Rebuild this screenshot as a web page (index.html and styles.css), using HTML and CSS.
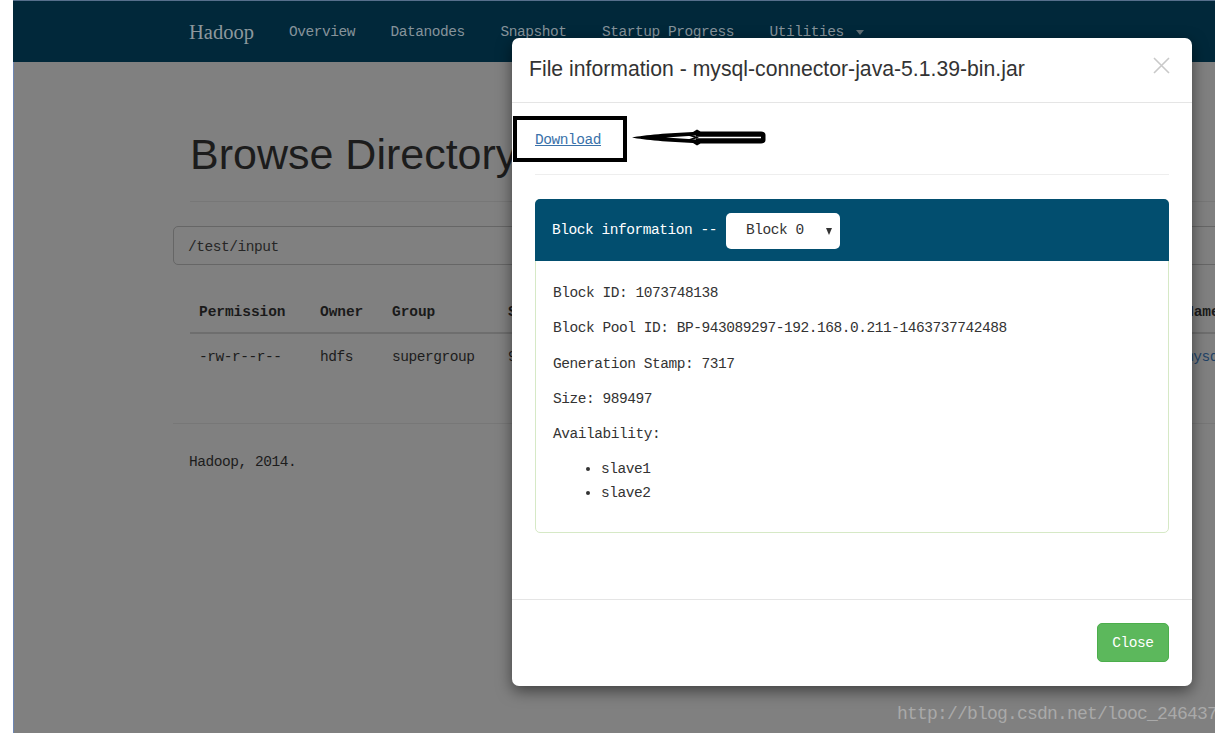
FILE: index.html
```html
<!DOCTYPE html>
<html lang="en">
<head>
<meta charset="utf-8">
<title>Browsing HDFS</title>
<link rel="stylesheet" href="styles.css">
</head>
<body>
<div class="screen">
  <nav class="navbar">
    <span class="brand">Hadoop</span>
    <ul class="nav">
      <li>Overview</li>
      <li>Datanodes</li>
      <li>Snapshot</li>
      <li>Startup Progress</li>
      <li>Utilities<span class="caret"></span></li>
    </ul>
  </nav>

  <main class="page">
    <div class="page-header"><h1>Browse Directory</h1></div>
    <div class="path-input">/test/input</div>
    <table class="listing">
      <colgroup>
        <col class="c-perm"><col class="c-owner"><col class="c-group"><col class="c-size">
        <col class="c-mod"><col class="c-rep"><col class="c-bsize"><col class="c-name">
      </colgroup>
      <thead>
        <tr><th>Permission</th><th>Owner</th><th>Group</th><th>Size</th><th>Last Modified</th><th>Replication</th><th>Block Size</th><th>Name</th></tr>
      </thead>
      <tbody>
        <tr><td>-rw-r--r--</td><td>hdfs</td><td>supergroup</td><td>966.31 KB</td><td>6/3/2016</td><td>2</td><td>128 MB</td><td><span class="link">mysql-connector-java-5.1.39-bin.jar</span></td></tr>
      </tbody>
    </table>
    <hr class="foot-rule">
    <p class="copy">Hadoop, 2014.</p>
  </main>

  <div class="modal">
    <div class="modal-header">
      <h4 class="modal-title">File information - mysql-connector-java-5.1.39-bin.jar</h4>
      <svg class="close" width="17" height="17" viewBox="0 0 17 17"><path d="M1 1 L16 16 M16 1 L1 16" stroke="#c9c9c9" stroke-width="1.6" fill="none"/></svg>
    </div>
    <div class="modal-body">
      <span class="download">Download</span>
      <hr class="divider">
      <div class="panel">
        <div class="panel-heading">
          <span>Block information --</span>
          <span class="select">Block 0<span class="arrow"></span></span>
        </div>
        <div class="panel-body">
          <p>Block ID: 1073748138</p>
          <p>Block Pool ID: BP-943089297-192.168.0.211-1463737742488</p>
          <p>Generation Stamp: 7317</p>
          <p>Size: 989497</p>
          <p>Availability:</p>
          <ul>
            <li>slave1</li>
            <li>slave2</li>
          </ul>
        </div>
      </div>
    </div>
    <div class="modal-footer">
      <button class="btn-close">Close</button>
    </div>
    <div class="mark-box"></div>
    <svg class="mark-arrow" width="140" height="22" viewBox="0 0 140 22">
      <path d="M2,10.5 C14,8 40,6 63,5 L67,2.6 L70.5,4.6 L131,4.6 Q135.5,4.6 135.5,8 L135.5,13 Q135.5,16.4 131,16.4 L70.5,16.4 L67,18.4 L63,16 C40,15 14,13 2,10.5 Z" fill="#000"/>
      <path d="M36,10.5 L66,8.4 L66,12.6 Z" fill="#fff"/>
      <path d="M66,10.5 L131,10.5" stroke="#fff" stroke-width="1.3"/>
      <path d="M59,8 L66.5,10.5 L59,13" stroke="#000" stroke-width="1.6" fill="none"/>
    </svg>
  </div>

  <div class="watermark">http://blog.csdn.net/looc_246437</div>
</div>
</body>
</html>
```

FILE: styles.css
```css
* { box-sizing: border-box; }

html, body {
  margin: 0;
  padding: 0;
  background: #fff;
}

body {
  font-family: "Liberation Mono", "DejaVu Sans Mono", monospace;
  font-size: 14.5px;
  letter-spacing: -0.45px;
  line-height: 23.4px;
  color: #333;
}

.screen {
  position: relative;
  margin-left: 13px;
  width: 1202px;
  height: 733px;
  overflow: hidden;
  background: #808080;
  box-shadow: inset 1px 0 0 #6d86b3;
}

/* navbar (dimmed by backdrop) */
.navbar {
  height: 62px;
  padding-top: 3px;
  background: #01283a;
  border-top: 1px solid #566f8c;
  display: flex;
  align-items: center;
}

.brand {
  font-family: "Liberation Serif", serif;
  font-size: 20.5px;
  letter-spacing: 0;
  color: #8d989d;
  margin-left: 176px;
  margin-right: 35px;
}

.nav {
  display: flex;
  gap: 35.6px;
  list-style: none;
  margin: 0;
  padding: 0;
  color: #86939a;
}

.caret {
  display: inline-block;
  width: 0;
  height: 0;
  border-top: 5px solid #5f6e75;
  border-left: 4.5px solid transparent;
  border-right: 4.5px solid transparent;
  margin-left: 12px;
  vertical-align: middle;
}

/* page under the backdrop */
.page {
  padding-left: 160px;
  color: #1a1a1a;
}

.page-header {
  margin-left: 17px;
  width: 1200px;
  padding-bottom: 22.3px;
  border-bottom: 1px solid #777;
}

.page-header h1 {
  margin: 69.4px 0 0;
  font-family: "Liberation Sans", Arial, sans-serif;
  font-size: 43px;
  font-weight: normal;
  line-height: 47.3px;
  letter-spacing: 0;
  color: #1c1c1c;
}

.path-input {
  margin-top: 24px;
  width: 1150px;
  height: 39px;
  border: 1px solid #666;
  border-radius: 5px;
  padding: 4px 0 0 14px;
  line-height: 33px;
  color: #262626;
}

.listing {
  margin: 25px 0 0 17px;
  width: 1286px;
  table-layout: fixed;
  border-collapse: collapse;
}

.c-perm { width: 121px; }
.c-owner { width: 72px; }
.c-group { width: 116px; }
.c-size { width: 150px; }
.c-mod { width: 230px; }
.c-rep { width: 120px; }
.c-bsize { width: 177px; }
.c-name { width: 300px; }

.listing th,
.listing td {
  text-align: left;
  padding: 11.4px 9px 7.4px;
  line-height: 23.4px;
  white-space: nowrap;
  overflow: hidden;
}

.listing th {
  font-weight: bold;
  letter-spacing: -0.05px;
  color: #1a1a1a;
  border-bottom: 2px solid #6e6e6e;
}

.listing td {
  color: #1c1c1c;
}

.link {
  color: #1f4266;
}

.foot-rule {
  margin: 47px 0 0;
  width: 1150px;
  border: 0;
  border-top: 1px solid #777;
}

.copy {
  margin: 27px 0 0 16px;
  color: #1c1c1c;
}

/* modal dialog */
.modal {
  position: absolute;
  left: 499px;
  top: 38px;
  width: 680px;
  background: #fff;
  border-radius: 7px;
  box-shadow: 0 5px 15px rgba(0, 0, 0, 0.5);
}

.modal-header {
  position: relative;
  height: 65px;
  display: flex;
  align-items: center;
  padding: 0 17px 2px;
  border-bottom: 1px solid #e5e5e5;
}

.modal-title {
  margin: 0;
  font-family: "Liberation Sans", Arial, sans-serif;
  font-size: 21.2px;
  font-weight: normal;
  letter-spacing: 0;
  line-height: 30px;
  color: #333;
}

.close {
  position: absolute;
  left: 641px;
  top: 19px;
}

.modal-body {
  padding: 26px 23px 23px;
}

.download {
  display: block;
  line-height: 23.4px;
  color: #3a72aa;
  text-decoration: underline;
}

.divider {
  margin: 21.6px 0 24px;
  border: 0;
  border-top: 1px solid #eee;
}

.panel {
  border: 1px solid #d6e9c6;
  border-radius: 5px;
  margin-bottom: 43px;
}

.panel-heading {
  margin: -1px -1px 0;
  height: 62px;
  padding: 2px 17px 0;
  display: flex;
  align-items: center;
  background: #024e6f;
  color: #fff;
  border-radius: 5px 5px 0 0;
}

.select {
  display: inline-flex;
  align-items: center;
  margin-left: 9px;
  width: 114px;
  height: 36px;
  padding-left: 20px;
  background: #fff;
  border-radius: 5px;
  color: #333;
}

.arrow {
  width: 0;
  height: 0;
  margin-left: auto;
  margin-right: 8px;
  border-top: 7px solid #333;
  border-left: 3.5px solid transparent;
  border-right: 3.5px solid transparent;
}

.panel-body {
  padding: 21px 17px 15px;
}

.panel-body p {
  margin: 0 0 11.9px;
}

.panel-body ul {
  margin: 0 0 11.7px;
  padding-left: 48px;
}

.modal-footer {
  border-top: 1px solid #e5e5e5;
  padding: 23px 23px 24px;
  display: flex;
  justify-content: flex-end;
}

.btn-close {
  width: 72px;
  height: 39px;
  padding: 3px 0 0;
  font: inherit;
  letter-spacing: inherit;
  color: #fff;
  background: #5cb85c;
  border: 1px solid #4cae4c;
  border-radius: 5px;
}

/* hand-drawn annotation */
.mark-box {
  position: absolute;
  left: 1px;
  top: 78px;
  width: 114px;
  height: 46px;
  border: 4px solid #000;
}

.mark-arrow {
  position: absolute;
  left: 118px;
  top: 89px;
}

.watermark {
  position: absolute;
  left: 884px;
  top: 702px;
  font-size: 18px;
  letter-spacing: -0.8px;
  line-height: 24px;
  color: #a9a9a9;
  white-space: nowrap;
}
```
